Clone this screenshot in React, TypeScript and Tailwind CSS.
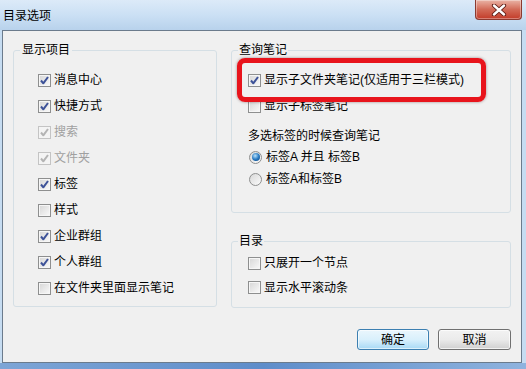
import React from "react";

type BoxProps = { checked?: boolean; disabled?: boolean };

function CheckBox({ checked, disabled }: BoxProps) {
  return (
    <span
      className={
        disabled
          ? "w-[13px] h-[13px] shrink-0 border border-[#c4c4c4] bg-[#f4f4f4] flex items-center justify-center"
          : "w-[13px] h-[13px] shrink-0 border border-[#8e8f8f] bg-gradient-to-br from-[#d6d6d6] to-[#fafafa] shadow-[inset_0_0_0_1px_#f6f6f6] flex items-center justify-center"
      }
    >
      {checked && (
        <svg width="11" height="11" viewBox="0 0 11 11">
          <path
            d="M2 5.5 L4.3 8.3 L9 2"
            fill="none"
            stroke={disabled ? "#b4b4b4" : "#3d5298"}
            strokeWidth="2"
            strokeLinejoin="round"
          />
        </svg>
      )}
    </span>
  );
}

function CheckRow({ label, checked, disabled, className = "" }: BoxProps & { label: string; className?: string }) {
  return (
    <div className={"flex items-center " + className}>
      <CheckBox checked={checked} disabled={disabled} />
      <span className={disabled ? "ml-[3px] text-[#a0a0a0]" : "ml-[3px] text-black"}>{label}</span>
    </div>
  );
}

function Radio({ label, checked }: { label: string; checked?: boolean }) {
  return (
    <div className="flex items-center h-[22px]">
      <span className="ml-[1px] w-[13px] h-[13px] rounded-full border border-[#8e8f8f] bg-gradient-to-br from-[#d8d8d8] to-[#fbfbfb] flex items-center justify-center">
        {checked && (
          <span className="w-[8px] h-[8px] rounded-full bg-[radial-gradient(circle_at_40%_35%,#b9e2fb,#2a7cc4_50%,#0c3f78)]" />
        )}
      </span>
      <span className="ml-[4px]">{label}</span>
    </div>
  );
}

export default function App() {
  return (
    <div className="w-[526px] h-[369px] overflow-hidden bg-[#c6dcf1] text-[12px] leading-[16px] text-black font-['Liberation_Sans','Noto_Sans_CJK_SC',sans-serif]">
      {/* title bar */}
      <div className="h-[30px] flex items-start bg-gradient-to-b from-[#dceaf8] via-[#cbe0f4] to-[#b8d2ec]">
        <span className="pl-[3px] pt-[8px]">目录选项</span>
        <div className="ml-auto mr-[4px] w-[47px] h-[20px] rounded-b-[4px] border border-t-0 border-[#8b3a30] bg-gradient-to-b from-[#e9b3a6] via-[#d26a57] to-[#c23a28] flex items-center justify-center shadow-[inset_0_0_0_1px_rgba(255,255,255,0.35)]">
          <svg width="16" height="12" viewBox="0 0 16 12">
            <path d="M3 1.5 L13 10.5 M13 1.5 L3 10.5" stroke="#5a1a12" strokeWidth="4.2" strokeLinecap="round" />
            <path d="M3 1.5 L13 10.5 M13 1.5 L3 10.5" stroke="#ffffff" strokeWidth="2.4" strokeLinecap="round" />
          </svg>
        </div>
      </div>

      {/* client area */}
      <div className="ml-[2px] w-[520px] h-[333px] border border-[#6b7b8c] bg-[#f0f0f0] pl-[10px] pt-[11px] flex items-start">
        <fieldset className="w-[204px] h-[265px] border border-[#d5dfe5] rounded-[3px]">
          <legend className="ml-[6px] px-[2px]">显示项目</legend>
          <div className="pt-[9px] pl-[24px]">
            <CheckRow className="h-[26px]" label="消息中心" checked />
            <CheckRow className="h-[26px]" label="快捷方式" checked />
            <CheckRow className="h-[26px]" label="搜索" checked disabled />
            <CheckRow className="h-[26px]" label="文件夹" checked disabled />
            <CheckRow className="h-[26px]" label="标签" checked />
            <CheckRow className="h-[26px]" label="样式" />
            <CheckRow className="h-[26px]" label="企业群组" checked />
            <CheckRow className="h-[26px]" label="个人群组" checked />
            <CheckRow className="h-[26px]" label="在文件夹里面显示笔记" />
          </div>
        </fieldset>

        <div className="ml-[14px] w-[280px] flex flex-col">
          <fieldset className="w-[280px] h-[171px] border border-[#d5dfe5] rounded-[3px]">
            <legend className="ml-[6px] px-[1px]">查询笔记</legend>
            <div className="pt-[9px] pl-[16px]">
              <div className="relative">
                <CheckRow className="h-[26px]" label="显示子文件夹笔记(仅适用于三栏模式)" checked />
                <div className="absolute left-[-11px] top-[-9px] w-[249px] h-[44px] rounded-[8px] border-[5px] border-[#e8141c] shadow-[0_0_3px_rgba(60,0,0,0.45)]" />
              </div>
              <CheckRow className="h-[26px]" label="显示子标签笔记" />
              <div className="mt-[7px] h-[20px] flex items-center">多选标签的时候查询笔记</div>
              <Radio label="标签A 并且 标签B" checked />
              <Radio label="标签A和标签B" />
            </div>
          </fieldset>

          <fieldset className="mt-[20px] w-[280px] h-[75px] border border-[#d5dfe5] rounded-[3px]">
            <legend className="ml-[6px] px-[1px]">目录</legend>
            <div className="pt-[2px] pl-[16px]">
              <CheckRow className="h-[24px]" label="只展开一个节点" />
              <CheckRow className="h-[25px]" label="显示水平滚动条" />
            </div>
          </fieldset>

          <div className="mt-[21px] flex justify-end gap-[9px]">
            <button className="w-[72px] h-[21px] rounded-[3px] border border-[#3c7fb1] bg-gradient-to-b from-[#eaf6fd] via-[#d9f0fc] to-[#a7d9f5] shadow-[inset_0_0_0_1px_rgba(255,255,255,0.6)] text-[12px] leading-[16px]">
              确定
            </button>
            <button className="w-[73px] h-[21px] rounded-[3px] border border-[#707070] bg-gradient-to-b from-[#f2f2f2] via-[#ebebeb] to-[#d0d0d0] shadow-[inset_0_0_0_1px_rgba(255,255,255,0.7)] text-[12px] leading-[16px]">
              取消
            </button>
          </div>
        </div>
      </div>

      {/* desktop strip */}
      <div className="h-[6px] bg-gradient-to-r from-[#7da5d6] via-[#5e8dca] to-[#8fb3de]" />
    </div>
  );
}
